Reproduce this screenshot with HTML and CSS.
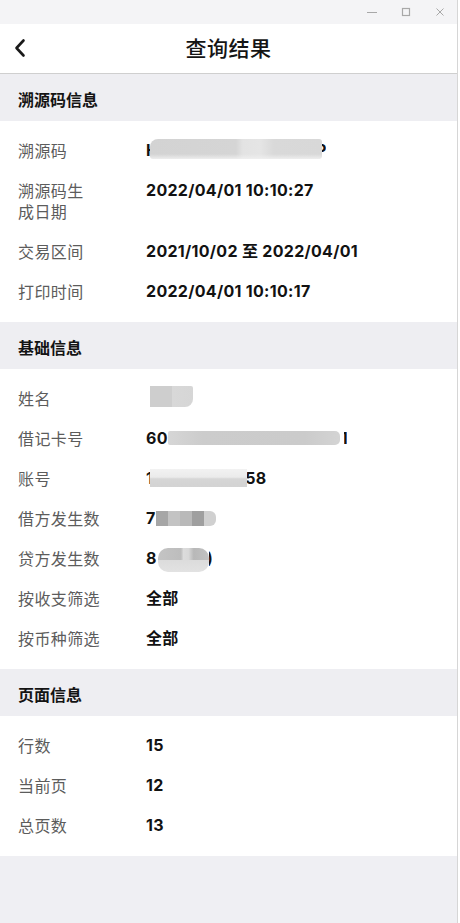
FILE: index.html
```html
<!DOCTYPE html>
<html lang="zh-CN">
<head>
<meta charset="utf-8">
<title>查询结果</title>
<link rel="stylesheet" href="styles.css">
</head>
<body>
<div class="app">
  <div class="titlebar">
    <svg class="wc" width="12" height="12" viewBox="0 0 12 12"><path d="M1 6.5H11" stroke="#a8a8a8" stroke-width="1"/></svg>
    <svg class="wc" width="12" height="12" viewBox="0 0 12 12"><rect x="2.5" y="2.5" width="7" height="7" fill="none" stroke="#a8a8a8" stroke-width="1.2"/></svg>
    <svg class="wc" width="12" height="12" viewBox="0 0 12 12"><path d="M2.5 2.5L9.5 9.5M9.5 2.5L2.5 9.5" stroke="#a8a8a8" stroke-width="1"/></svg>
  </div>
  <header class="nav">
    <svg class="back" width="14" height="20" viewBox="0 0 14 20"><path d="M10.5 2.5L3.5 10L10.5 17.5" fill="none" stroke="#1a1a1a" stroke-width="2.6" stroke-linecap="round" stroke-linejoin="round"/></svg>
    <h1 class="title">查询结果</h1>
  </header>

  <section class="group">
    <div class="group-head">溯源码信息</div>
    <div class="group-body">
      <div class="row"><div class="label">溯源码</div><div class="value"><span class="clip-r">H</span><span class="m m1"></span><span class="clip clip-p">P</span></div></div>
      <div class="row"><div class="label">溯源码生<br>成日期</div><div class="value">2022/04/01 10:10:27</div></div>
      <div class="row"><div class="label">交易区间</div><div class="value">2021/10/02 至 2022/04/01</div></div>
      <div class="row"><div class="label">打印时间</div><div class="value">2022/04/01 10:10:17</div></div>
    </div>
  </section>

  <section class="group">
    <div class="group-head">基础信息</div>
    <div class="group-body">
      <div class="row"><div class="label">姓名</div><div class="value"><span class="m m2"></span></div></div>
      <div class="row"><div class="label">借记卡号</div><div class="value"><span>60</span><span class="m m3"></span><span class="clip clip-one">1</span></div></div>
      <div class="row"><div class="label">账号</div><div class="value"><span>1</span><span class="m m4"></span><span>58</span></div></div>
      <div class="row"><div class="label">借方发生数</div><div class="value"><span>7</span><span class="m m5"><i></i><i></i><i></i><i></i><i></i></span></div></div>
      <div class="row"><div class="label">贷方发生数</div><div class="value"><span>8</span><span class="m m6"></span><span class="clip clip-paren">)</span></div></div>
      <div class="row"><div class="label">按收支筛选</div><div class="value">全部</div></div>
      <div class="row"><div class="label">按币种筛选</div><div class="value">全部</div></div>
    </div>
  </section>

  <section class="group">
    <div class="group-head">页面信息</div>
    <div class="group-body">
      <div class="row"><div class="label">行数</div><div class="value">15</div></div>
      <div class="row"><div class="label">当前页</div><div class="value">12</div></div>
      <div class="row"><div class="label">总页数</div><div class="value">13</div></div>
    </div>
  </section>
  <div class="filler"></div>
</div>
</body>
</html>
```

FILE: styles.css
```css
html, body {
  margin: 0;
  padding: 0;
  background: #ffffff;
}
body {
  font-family: "Noto Sans CJK SC", "Noto Sans", sans-serif;
}
.app {
  width: 457px;
  min-height: 923px;
  border-right: 1px solid #d6d6d6;
  background: #efeff3;
  display: flex;
  flex-direction: column;
}
.titlebar {
  height: 24px;
  background: #f4f4f6;
  display: flex;
  justify-content: flex-end;
  align-items: center;
  gap: 22px;
  padding-right: 11px;
}
.wc { display: block; }
.nav {
  height: 46px;
  padding-bottom: 3px;
  background: #ffffff;
  border-bottom: 1px solid #cfcfcf;
  display: flex;
  align-items: center;
  justify-content: center;
  position: relative;
}
.back {
  position: absolute;
  left: 13px;
  top: 14px;
}
.title {
  margin: 0;
  font-size: 21px;
  font-weight: 500;
  color: #151515;
  letter-spacing: 0.5px;
  line-height: 28px;
}
.group-head {
  height: 43px;
  padding-top: 4px;
  display: flex;
  align-items: center;
  padding-left: 18px;
  background: #eeeef2;
  font-size: 16px;
  font-weight: 600;
  color: #141414;
  line-height: 21px;
}
.group-body {
  background: #ffffff;
  padding: 10px 0;
}
.row {
  display: flex;
  align-items: flex-start;
  padding: 8.5px 0 10.5px;
  line-height: 21px;
}
.label {
  width: 128px;
  padding-left: 18px;
  flex: none;
  font-size: 16px;
  color: #5c5c5c;
  letter-spacing: 0.4px;
}
.value {
  font-family: Inter, "Noto Sans CJK SC", sans-serif;
  font-size: 16px;
  font-weight: 700;
  color: #121212;
  letter-spacing: 0.3px;
  height: 21px;
  line-height: 21px;
  display: flex;
  align-items: center;
  white-space: pre;
}
.m {
  display: inline-block;
  flex: none;
}
.clip-r {
  display: inline-block;
  width: 5px;
  overflow: hidden;
}
.clip {
  display: inline-block;
  overflow: hidden;
  flex: none;
}
.clip-p {
  width: 5px;
  text-indent: -5px;
  margin-left: -1px;
}
.clip-one {
  width: 3px;
  text-indent: -3px;
  margin-left: 4px;
}
.clip-paren {
  width: 3px;
  text-indent: -2px;
}
.m1 {
  width: 172px;
  height: 20px;
  margin-left: -1px;
  border-radius: 8px 3px 3px 3px;
  background:
    linear-gradient(to bottom, rgba(255,255,255,0) 0, rgba(255,255,255,0) 75%, rgba(240,240,240,0.9) 100%),
    linear-gradient(to right, #d3d3d3 0, #d5d5d5 50%, #e3e3e3 54%, #e5e5e5 64%, #d9d9d9 72%, #d8d8d8 100%);
  filter: blur(0.6px);
  transform: translateY(-1px);
}
.m2 {
  width: 43px;
  height: 21px;
  margin-left: 4px;
  border-radius: 0 2px 8px 0;
  background: linear-gradient(to right, #cecece 0, #cecece 50%, #d8d8d8 52%, #d6d6d6 100%);
  transform: translateY(-2px);
}
.m3 {
  width: 172px;
  height: 14px;
  margin-left: 0;
  border-radius: 2px 5px 5px 2px;
  background: linear-gradient(to right, #d6d6d6 0, #cccccc 20%, #cbcbcb 80%, #d4d4d4 100%);
  filter: blur(0.5px);
}
.m4 {
  width: 97px;
  height: 18px;
  margin-left: -3px;
  margin-right: -2px;
  background: linear-gradient(to bottom, #f2f2f2 0, #ebebeb 45%, #d6d6d6 55%, #d3d3d3 100%);
  filter: blur(0.6px);
  position: relative;
  z-index: 1;
}
.m5 {
  width: 60px;
  height: 15px;
  display: inline-flex;
  border-radius: 0 6px 6px 0;
  overflow: hidden;
}
.m5 i {
  flex: 1;
}
.m5 i:nth-child(1) { background: #a6a6a6; }
.m5 i:nth-child(2) { background: #c3c3c3; }
.m5 i:nth-child(3) { background: #b9b9b9; }
.m5 i:nth-child(4) { background: #9f9f9f; }
.m5 i:nth-child(5) { background: #d0d0d0; }
.m6 {
  width: 51px;
  height: 24px;
  margin-left: 1px;
  border-radius: 10px;
  background:
    linear-gradient(to bottom, rgba(0,0,0,0) 0, rgba(0,0,0,0) 48%, #dcdcdc 52%, #e2e2e2 100%),
    linear-gradient(to right, #c4c4c4 0, #bdbdbd 45%, #dcdcdc 50%, #d8d8d8 60%, #b8b8b8 70%, #c2c2c2 100%);
  filter: blur(0.5px);
  transform: translateY(2px);
}
.filler {
  flex: 1;
  background: #efeff3;
}
```
